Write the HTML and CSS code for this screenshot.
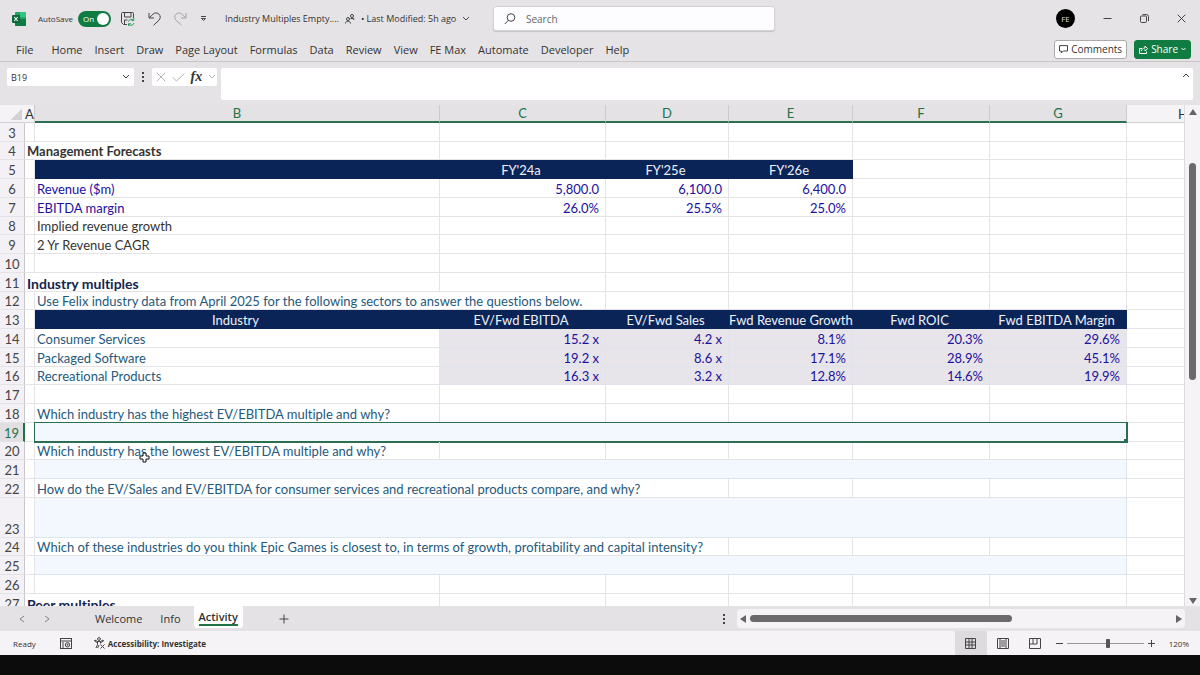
FILE: index.html
```html
<!DOCTYPE html>
<html lang="en">
<head>
    <meta charset="UTF-8">
    <meta name="viewport" content="width=device-width, initial-scale=1.0">
    <title>Industry Multiples Empty - Excel</title>
    <link rel="stylesheet" href="styles.css">
</head>
<body>
    <!-- TITLE BAR -->
    <header class="title-bar">
        <svg class="logo" width="14" height="14" viewBox="0 0 14 14">
            <rect x="3" y="0" width="11" height="14" rx="1" fill="#21a366"/>
            <rect x="8" y="0" width="6" height="5" fill="#33c481"/>
            <rect x="3" y="7" width="11" height="7" rx="1" fill="#107c41"/>
            <rect x="0" y="3" width="8" height="8" rx="1" fill="#0b6a37"/>
            <path d="M2.3 5l3.4 4M5.7 5L2.3 9" stroke="#fff" stroke-width="1.1"/>
        </svg>
        <label class="autosave">
            AutoSave
            <input type="checkbox" role="switch" checked>
            <span class="switch"><span>On</span></span>
        </label>
        <div class="quick-access">
            <button aria-label="Save">
                <svg width="14" height="14" viewBox="0 0 14 14">
                    <path d="M6 12.5H2.5l-2-2V1.5a1 1 0 0 1 1-1h10a1 1 0 0 1 1 1V6M3.500.5V5h6.500V.5M3.500 12V8h3"/>
                    <path class="green" d="M7.500 9.500a3 3 0 0 1 5-1.500M12.800 6.200v2.300h-2.300M13 11a3 3 0 0 1-5 1.500M7.500 14v-2.300h2.300"/>
                </svg>
            </button>
            <button aria-label="Undo">
                <svg width="13" height="14" viewBox="0 0 13 14">
                    <path d="M1 1v5h5M1.300 5.800L5 2.200a4.200 4.200 0 0 1 6 6L5.500 13.300"/>
                </svg>
            </button>
            <button class="faded" aria-label="Redo">
                <svg width="13" height="14" viewBox="0 0 13 14">
                    <path d="M12 1v5H7M11.700 5.800L8 2.200a4.200 4.200 0 0 0-6 6L7.500 13.300"/>
                </svg>
            </button>
            <button aria-label="Customize quick access">
                <svg width="7" height="6" viewBox="0 0 7 6"><path d="M1 .5h5M1.500 2.500l2 2 2-2z"/></svg>
            </button>
        </div>
        <button class="file-name">
            Industry Multiples Empty....
            <svg width="10" height="10" viewBox="0 0 10 10">
                <circle cx="3" cy="5" r="1.500"/><path d="M.5 9.500c0-3 5-3 5 0"/>
                <circle cx="7" cy="2" r="1.500"/><path d="M5.500 4.500h3.300v1.500"/>
            </svg>
            <span>• Last Modified: 5h ago</span>
            <svg width="8" height="6" viewBox="0 0 8 6"><path d="M1 1l3 3 3-3"/></svg>
        </button>
        <label class="search">
            <svg width="12" height="12" viewBox="0 0 12 12"><circle cx="7" cy="4.500" r="3.800"/><path d="M4.300 7.300L.8 11"/></svg>
            <input type="text" placeholder="Search" aria-label="Search">
        </label>
        <div class="window-buttons">
            <button class="avatar" aria-label="Account">FE</button>
            <button aria-label="Minimize"><svg width="9" height="9" viewBox="0 0 9 9"><path d="M.5 4.500h8"/></svg></button>
            <button aria-label="Restore"><svg width="9" height="9" viewBox="0 0 9 9"><rect x=".5" y="2" width="6" height="6.500" rx="1"/><path d="M2.500.6h4a2 2 0 0 1 2 2V7"/></svg></button>
            <button aria-label="Close"><svg width="9" height="9" viewBox="0 0 9 9"><path d="M.7.7l7.600 7.600M8.300.7L.7 8.300"/></svg></button>
        </div>
    </header>

    <!-- RIBBON TABS -->
    <nav class="ribbon">
        <button class="file">File</button>
        <button>Home</button>
        <button>Insert</button>
        <button>Draw</button>
        <button>Page Layout</button>
        <button>Formulas</button>
        <button>Data</button>
        <button>Review</button>
        <button>View</button>
        <button>FE Max</button>
        <button>Automate</button>
        <button>Developer</button>
        <button>Help</button>
        <div class="ribbon-right">
            <button class="comments">
                <svg width="9" height="9" viewBox="0 0 9 9"><path d="M.5.6h8v5.400H4.300L2.300 8V6H.5z"/></svg>
                Comments
            </button>
            <button class="share">
                <svg width="9" height="9" viewBox="0 0 9 9"><path d="M3 3.500H.6v5h7V6.500M2.500 6c.3-2 1.500-3 3.500-3V1l2.600 2.600L6 6V4.500"/></svg>
                Share
                <svg width="5" height="4" viewBox="0 0 5 4"><path d="M.5 1l2 2 2-2"/></svg>
            </button>
        </div>
    </nav>

    <!-- FORMULA BAR -->
    <div class="formula-row">
        <div class="name-box">
            <input type="text" value="B19" aria-label="Name box">
            <svg width="8" height="6" viewBox="0 0 8 6"><path d="M1 1l3 3 3-3"/></svg>
        </div>
        <span class="dots"></span>
        <div class="fx-box">
            <button class="faded" aria-label="Cancel"><svg width="10" height="10" viewBox="0 0 10 10"><path d="M.7.7l8.600 8.600M9.300.7L.7 9.300"/></svg></button>
            <button class="faded" aria-label="Enter"><svg width="13" height="9" viewBox="0 0 13 9"><path d="M.7 4.500L4.500 8 12.300.7"/></svg></button>
            <button class="fx" aria-label="Insert function">fx</button>
            <svg class="faded" width="8" height="6" viewBox="0 0 8 6"><path d="M1 1l3 3 3-3"/></svg>
        </div>
        <div class="formula">
            <textarea aria-label="Formula bar"></textarea>
            <svg width="8" height="5" viewBox="0 0 8 5"><path d="M1 4l3-3 3 3"/></svg>
        </div>
    </div>

    <!-- SHEET -->
    <main class="sheet">
        <div class="grid">
            <table>
                <colgroup>
                    <col class="col-num"><col class="col-a"><col class="col-b"><col class="col-c"><col class="col-d"><col class="col-e"><col class="col-f"><col class="col-g"><col>
                </colgroup>
                <thead>
                    <tr>
                        <th class="corner"></th>
                        <th class="plain">A</th>
                        <th>B</th><th>C</th><th>D</th><th>E</th><th>F</th><th>G</th>
                        <th class="plain">H</th>
                    </tr>
                </thead>
                <tbody>
                    <tr><th>3</th><td></td><td></td><td></td><td></td><td></td><td></td><td></td><td></td></tr>
                    <tr><th>4</th><td colspan="2" class="title">Management Forecasts</td><td></td><td></td><td></td><td></td><td></td><td></td></tr>
                    <tr><th>5</th><td></td><td class="head"></td><td class="head">FY'24a</td><td class="head">FY'25e</td><td class="head">FY'26e</td><td></td><td></td><td></td></tr>
                    <tr><th>6</th><td></td><td class="blue">Revenue ($m)</td><td class="num">5,800.0</td><td class="num">6,100.0</td><td class="num">6,400.0</td><td></td><td></td><td></td></tr>
                    <tr><th>7</th><td></td><td class="blue">EBITDA margin</td><td class="num">26.0%</td><td class="num">25.5%</td><td class="num">25.0%</td><td></td><td></td><td></td></tr>
                    <tr><th>8</th><td></td><td>Implied revenue growth</td><td></td><td></td><td></td><td></td><td></td><td></td></tr>
                    <tr><th>9</th><td></td><td>2 Yr Revenue CAGR</td><td></td><td></td><td></td><td></td><td></td><td></td></tr>
                    <tr><th>10</th><td></td><td></td><td></td><td></td><td></td><td></td><td></td><td></td></tr>
                    <tr><th>11</th><td colspan="2" class="title navy">Industry multiples</td><td></td><td></td><td></td><td></td><td></td><td></td></tr>
                    <tr><th>12</th><td></td><td colspan="2" class="teal">Use Felix industry data from April 2025 for the following sectors to answer the questions below.</td><td></td><td></td><td></td><td></td><td></td></tr>
                    <tr><th>13</th><td></td><td class="head">Industry</td><td class="head">EV/Fwd EBITDA</td><td class="head">EV/Fwd Sales</td><td class="head">Fwd Revenue Growth</td><td class="head">Fwd ROIC</td><td class="head">Fwd EBITDA Margin</td><td></td></tr>
                    <tr><th>14</th><td></td><td class="teal">Consumer Services</td><td class="num fill">15.2 x</td><td class="num fill">4.2 x</td><td class="num fill">8.1%</td><td class="num fill">20.3%</td><td class="num fill">29.6%</td><td></td></tr>
                    <tr><th>15</th><td></td><td class="teal">Packaged Software</td><td class="num fill">19.2 x</td><td class="num fill">8.6 x</td><td class="num fill">17.1%</td><td class="num fill">28.9%</td><td class="num fill">45.1%</td><td></td></tr>
                    <tr><th>16</th><td></td><td class="teal">Recreational Products</td><td class="num fill">16.3 x</td><td class="num fill">3.2 x</td><td class="num fill">12.8%</td><td class="num fill">14.6%</td><td class="num fill">19.9%</td><td></td></tr>
                    <tr><th>17</th><td></td><td></td><td></td><td></td><td></td><td></td><td></td><td></td></tr>
                    <tr><th>18</th><td></td><td class="teal">Which industry has the highest EV/EBITDA multiple and why?</td><td></td><td></td><td></td><td></td><td></td><td></td></tr>
                    <tr><th class="current">19</th><td></td><td colspan="6" class="answer selected"></td><td></td></tr>
                    <tr>
                        <th>20</th><td></td>
                        <td class="teal has-cursor">Which industry has the lowest EV/EBITDA multiple and why?
                            <svg class="cursor" width="11" height="11" viewBox="0 0 11 11"><path d="M4 1h3v3h3v3H7v3H4V7H1V4h3z" fill="#fff" stroke="#111"/></svg>
                        </td>
                        <td></td><td></td><td></td><td></td><td></td><td></td>
                    </tr>
                    <tr><th>21</th><td></td><td colspan="6" class="answer"></td><td></td></tr>
                    <tr><th>22</th><td></td><td colspan="3" class="teal">How do the EV/Sales and EV/EBITDA for consumer services and recreational products compare, and why?</td><td></td><td></td><td></td><td></td></tr>
                    <tr class="tall"><th>23</th><td></td><td colspan="6" class="answer"></td><td></td></tr>
                    <tr><th>24</th><td></td><td colspan="3" class="teal">Which of these industries do you think Epic Games is closest to, in terms of growth, profitability and capital intensity?</td><td></td><td></td><td></td><td></td></tr>
                    <tr><th>25</th><td></td><td colspan="6" class="answer"></td><td></td></tr>
                    <tr><th>26</th><td></td><td></td><td></td><td></td><td></td><td></td><td></td><td></td></tr>
                    <tr><th>27</th><td colspan="2" class="title navy">Peer multiples</td><td></td><td></td><td></td><td></td><td></td><td></td></tr>
                </tbody>
            </table>
        </div>
        <div class="scroll-y">
            <svg width="8" height="6" viewBox="0 0 8 6"><path d="M4 0l4 6H0z"/></svg>
            <div class="track"><div class="thumb"></div></div>
            <svg width="8" height="6" viewBox="0 0 8 6"><path d="M4 6l4-6H0z"/></svg>
        </div>
    </main>

    <!-- SHEET TABS -->
    <div class="tabs-row">
        <div class="tab-arrows">
            <button aria-label="Previous sheet"><svg width="6" height="8" viewBox="0 0 6 8"><path d="M5 1L1 4l4 3"/></svg></button>
            <button aria-label="Next sheet"><svg width="6" height="8" viewBox="0 0 6 8"><path d="M1 1l4 3-4 3"/></svg></button>
        </div>
        <button class="tab">Welcome</button>
        <button class="tab">Info</button>
        <button class="tab active"><span>Activity</span></button>
        <button class="add" aria-label="New sheet"><svg width="10" height="10" viewBox="0 0 10 10"><path d="M5 .5v9M.5 5h9"/></svg></button>
        <div class="scroll-side">
            <span class="dots"></span>
            <div class="scroll-x">
                <svg width="6" height="8" viewBox="0 0 6 8"><path d="M0 4l6-4v8z"/></svg>
                <div class="track"><div class="thumb"></div></div>
                <svg width="6" height="8" viewBox="0 0 6 8"><path d="M6 4L0 0v8z"/></svg>
            </div>
        </div>
    </div>

    <!-- STATUS BAR -->
    <footer class="status">
        <span class="ready">Ready</span>
        <button class="macro" aria-label="Record macro">
            <svg width="12" height="11" viewBox="0 0 12 11"><rect x=".5" y=".5" width="11" height="10"/><path d="M.5 3h11M2 5h2M2 7h2M2 9h2"/><circle cx="7.500" cy="6.800" r="2.200"/><circle cx="7.500" cy="6.800" r=".6"/></svg>
        </button>
        <button class="access">
            <svg width="11" height="12" viewBox="0 0 11 12"><circle cx="5" cy="2" r="1.400"/><path d="M1 3l2.500 1.500h3L9 3M3.500 4.500v3L2 11M6.500 4.500v2M1 3l-.5 1L3 5.500M9 3l.5 1L7 5.500M5 8l-1.500 3M6.500 7.500l4 4M10.500 7.500l-4 4"/></svg>
            Accessibility: Investigate
        </button>
        <div class="views">
            <button class="on" aria-label="Normal view"><svg width="11" height="11" viewBox="0 0 11 11"><path d="M.5.5h10v10H.5zM.5 4h10M.5 7h10M4 .5v10M7 .5v10"/></svg></button>
            <button aria-label="Page layout view"><svg width="12" height="11" viewBox="0 0 12 11"><path d="M.5.5h11v10H.5zM3 .5v10M9 .5v10M5 2v7M7 2v7"/></svg></button>
            <button aria-label="Page break view"><svg width="12" height="11" viewBox="0 0 12 11"><path d="M.5.5h11v10H.5zM4 .5V6M.5 6h7.500M8 .5V6"/></svg></button>
        </div>
        <div class="zoom">
            <button aria-label="Zoom out"><svg width="7" height="7" viewBox="0 0 7 7"><path d="M0 3.500h7"/></svg></button>
            <input type="range" min="0" max="100" value="54" aria-label="Zoom">
            <button aria-label="Zoom in"><svg width="7" height="7" viewBox="0 0 7 7"><path d="M0 3.500h7M3.500 0v7"/></svg></button>
            <span>120%</span>
        </div>
    </footer>
</body>
</html>
```

FILE: styles.css
```css
* {
    box-sizing: border-box;
}

body {
    height: 100vh;
    margin: 0;
    padding-bottom: 20px;
    overflow: hidden;
    display: flex;
    flex-direction: column;
    background-color: #0c0c0c;
    color: #333;
    font-family: "Open Sans", "Noto Sans", sans-serif;
    font-size: 11px;
}

button,
input,
textarea {
    margin: 0;
    padding: 0;
    border: none;
    background: none;
    color: inherit;
    font: inherit;
    outline: none;
}

button {
    display: flex;
    align-items: center;
    white-space: nowrap;
}

svg {
    flex: none;
    fill: none;
    stroke: #444;
}

.faded {
    opacity: .4;
}

/* title bar */
.title-bar {
    height: 37px;
    flex: none;
    display: flex;
    align-items: center;
    padding: 0 14px 0 12px;
    background-color: #e5e3e6;
    font-size: 9px;
}

.logo {
    stroke: none;
}

.autosave {
    display: flex;
    align-items: center;
    gap: 5px;
    margin-left: 12px;
    font-size: 8px;
}

.autosave input {
    position: absolute;
    opacity: 0;
}

.switch {
    width: 33px;
    height: 16px;
    padding: 0 2px 0 5px;
    display: flex;
    align-items: center;
    justify-content: space-between;
    border-radius: 8px;
    background-color: #107c41;
    color: white;
}

.switch::after {
    content: "";
    width: 12px;
    height: 12px;
    border-radius: 50%;
    background-color: white;
}

.quick-access {
    display: flex;
    align-items: center;
    gap: 13px;
    margin-left: 10px;
}

.green {
    stroke: #2b9a5c;
}

.file-name {
    width: 243px;
    gap: 6px;
    margin-left: 18px;
}

.search {
    width: 24%;
    height: 25px;
    margin-left: 25px;
    padding-left: 10px;
    display: flex;
    align-items: center;
    gap: 10px;
    border: 1px solid #d4d2d5;
    border-radius: 3px;
    background-color: #fdfcfe;
    box-shadow: 0 1px 1px #c4c2c5;
    font-size: 10px;
}

.search input {
    flex: 1;
    min-width: 0;
}

.search input::placeholder {
    color: #666;
}

.window-buttons {
    display: flex;
    align-items: center;
    gap: 28px;
    margin-left: auto;
}

.avatar {
    width: 19px;
    height: 19px;
    justify-content: center;
    border-radius: 50%;
    background-color: black;
    color: #ddd;
    font-size: 8px;
}

/* ribbon */
.ribbon {
    height: 25px;
    flex: none;
    display: flex;
    align-items: center;
    gap: 12px;
    padding: 0 9px 0 16px;
    background-color: #e5e3e6;
    border-bottom: 1px solid #c8c6c9;
}

.ribbon .file {
    margin-right: 6px;
}

.ribbon-right {
    display: flex;
    gap: 7px;
    margin-left: auto;
    font-size: 10px;
}

.comments,
.share {
    height: 19px;
    padding: 0 4px;
    gap: 3px;
    border: 1px solid #aaa;
    border-radius: 3px;
    background-color: white;
}

.share {
    border-color: #107c41;
    background-color: #107c41;
    color: white;
}

.share svg {
    stroke: white;
}

/* formula bar */
.formula-row {
    flex: none;
    display: flex;
    align-items: flex-start;
    padding: 6px 7px 5px;
    background-color: #e5e3e6;
}

.name-box,
.fx-box {
    height: 18px;
    display: flex;
    align-items: center;
    border-radius: 2px;
    background-color: white;
}

.name-box {
    width: 127px;
    padding: 0 4px;
    font-size: 9px;
}

.name-box input {
    flex: 1;
    min-width: 0;
}

.dots {
    width: 2px;
    height: 10px;
    background: repeating-linear-gradient(#444 0 2px, transparent 2px 4px);
}

.name-box + .dots {
    margin: 4px 8px 0;
}

.fx-box {
    width: 65px;
    padding: 0 1px 0 4px;
    justify-content: space-between;
}

.fx {
    font-family: "Liberation Serif", serif;
    font-size: 14px;
    font-style: italic;
    font-weight: bold;
}

.formula {
    flex: 1;
    height: 32px;
    margin-left: 4px;
    padding: 5px 3px;
    display: flex;
    border-radius: 2px;
    background-color: white;
}

.formula textarea {
    flex: 1;
    resize: none;
    height: 22px;
}

/* sheet */
.sheet {
    flex: 1;
    min-height: 0;
    display: flex;
    background-color: #f5f3f6;
}

.grid {
    flex: 1;
    overflow: hidden;
    background-color: white;
    font-family: Lato, "Open Sans", sans-serif;
    font-size: 13px;
    font-variant-ligatures: none;
}

table {
    width: calc(100% + 56px);
    table-layout: fixed;
    border-collapse: separate;
    border-spacing: 0;
}

.col-num { width: 25px; }
.col-a { width: 10px; }
.col-b { width: 405px; }
.col-c { width: 166px; }
.col-d { width: 123px; }
.col-e { width: 124px; }
.col-f { width: 137px; }
.col-g { width: 137px; }

th,
td {
    height: 19px;
    padding: 0;
    line-height: 15px;
    vertical-align: bottom;
    white-space: nowrap;
    border-right: 1px solid #e4e4e6;
    border-bottom: 1px solid #e4e4e6;
}

tbody tr:nth-child(4n+2) th,
tbody tr:nth-child(4n+2) td {
    height: 18px;
}

th {
    font-weight: normal;
}

thead th {
    height: 18px;
    background-color: #e4e2e5;
    border-right-color: #cccacd;
    border-bottom: 2px solid #2b6e50;
    color: #217346;
}

thead .plain,
thead .corner {
    background-color: #f5f3f6;
    border-bottom: 1px solid #d0ced1;
    color: #333;
}

thead .corner {
    background-image: linear-gradient(135deg, transparent 50%, #d4d2d5 50%);
    background-position: 11px 4px;
    background-size: 11px 11px;
    background-repeat: no-repeat;
    border-right-color: #f5f3f6;
}

tbody th {
    background-color: #f3f1f5;
    border-right-color: #c8c6c9;
    color: #444;
}

tbody th.current {
    background-color: #e1dfe2;
    border-right: 2px solid #217346;
    color: #217346;
}

td {
    padding-left: 2px;
}

td + td {
    padding-right: 6px;
}

.title {
    font-weight: bold;
}

.navy {
    color: #14254f;
    font-size: 14px;
}

.blue,
.num {
    color: #1d0fa0;
}

.teal {
    color: #25597b;
}

.num {
    text-align: right;
}

.fill {
    background-color: #e7e5e9;
    border-color: #dfe3ee;
}

td.head {
    padding: 0 3px 0 0;
    text-align: center;
    background-color: #0b2458;
    border-color: #0b2458;
    color: #eef2fa;
}

.answer {
    background-color: #f2f8fe;
    border-color: #d9e6ee;
}

.selected {
    position: relative;
    outline: 1px solid #2b6e50;
    border-color: #2b6e50;
}

.selected::after {
    content: "";
    position: absolute;
    right: -2px;
    bottom: -2px;
    width: 4px;
    height: 4px;
    background-color: #2b6e50;
}

.tall th,
.tall td {
    height: 40px;
}

.has-cursor {
    position: relative;
}

.cursor {
    position: absolute;
    left: 104px;
    top: 10px;
}

/* scrollbars */
.scroll-y {
    width: 16px;
    padding: 4px 0 2px;
    display: flex;
    flex-direction: column;
    align-items: center;
    gap: 6px;
    border-left: 1px solid #dddbde;
}

.scroll-y svg,
.scroll-x svg {
    fill: #666;
    stroke: none;
}

.track {
    flex: 1;
}

.thumb {
    border-radius: 4px;
    background-color: #6b696c;
}

.scroll-y .thumb {
    width: 7px;
    height: 46%;
    margin-top: 42px;
}

.scroll-x {
    flex: 1;
    height: 19px;
    padding: 0 3px;
    display: flex;
    align-items: center;
    gap: 4px;
    border-radius: 4px;
    background-color: #f5f3f6;
}

.scroll-x .thumb {
    width: 62%;
    height: 7px;
}

/* sheet tabs */
.tabs-row {
    height: 25px;
    flex: none;
    display: flex;
    align-items: center;
    padding-right: 15px;
    background-color: #e4e2e5;
}

.tab-arrows {
    width: 86px;
    padding-left: 19px;
    display: flex;
    gap: 19px;
    opacity: .6;
}

.tab {
    height: 22px;
    padding: 0 9px;
}

.tab.active {
    align-self: flex-start;
    padding: 0 5px;
    margin-left: 4px;
    border-radius: 0 0 3px 3px;
    background-color: white;
    font-weight: 600;
}

.tab.active span {
    border-bottom: 2px solid #217346;
}

.add {
    margin-left: 36px;
}

.scroll-side {
    width: 39%;
    margin-left: auto;
    display: flex;
    align-items: center;
    gap: 12px;
}

/* status bar */
.status {
    height: 24px;
    flex: none;
    display: flex;
    align-items: center;
    padding: 0 11px 0 13px;
    background-color: #f5f3f6;
    font-size: 8px;
}

.macro {
    margin-left: 24px;
}

.access {
    gap: 3px;
    margin-left: 22px;
    font-weight: bold;
}

.views {
    height: 100%;
    display: flex;
    margin-left: auto;
}

.views button {
    width: 32px;
    justify-content: center;
}

.views .on {
    background-color: #dddbde;
}

.zoom {
    display: flex;
    align-items: center;
    gap: 4px;
    margin-left: 5px;
}

.zoom input {
    width: 77px;
    height: 10px;
    appearance: none;
    background: linear-gradient(#999, #999) center / 100% 1px no-repeat;
}

.zoom input::-webkit-slider-thumb {
    appearance: none;
    width: 4px;
    height: 9px;
    border-radius: 1px;
    background-color: #555;
}

.zoom span {
    margin-left: 10px;
}
```
